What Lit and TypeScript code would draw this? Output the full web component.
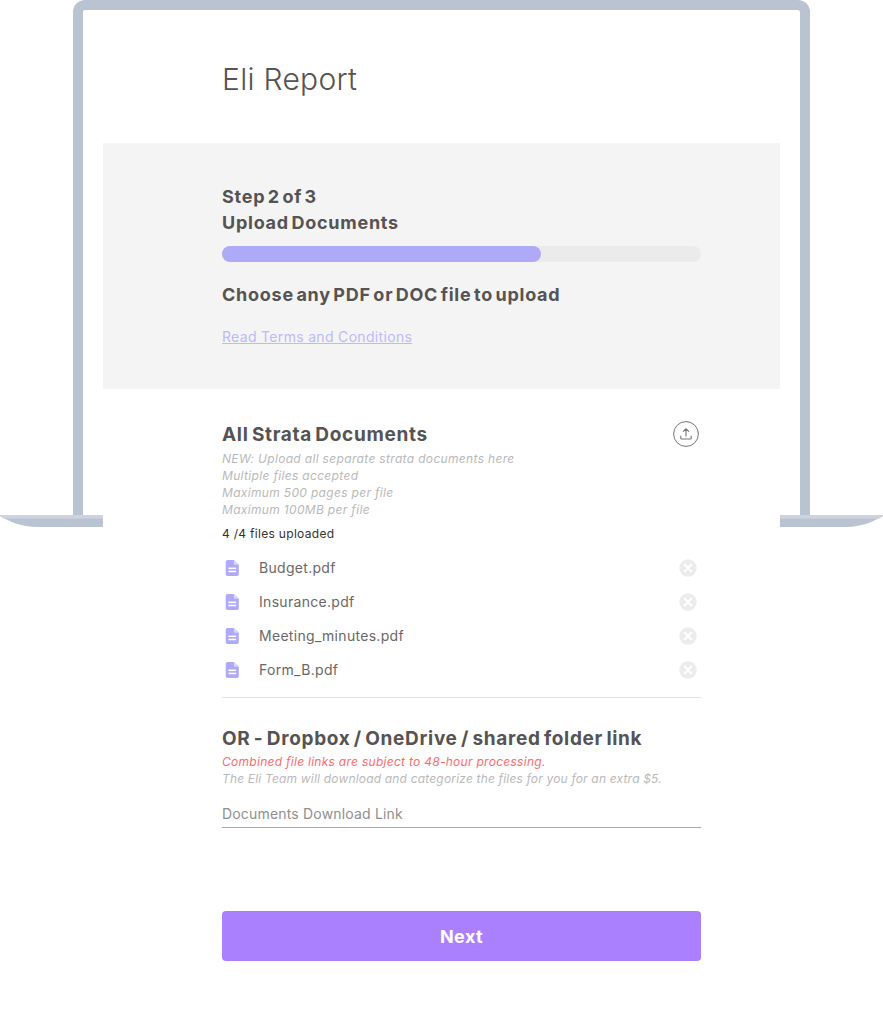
import { LitElement, html, css, svg } from "lit";
import { customElement } from "lit/decorators.js";

const fileIcon = svg`<svg class="file-icon" viewBox="0 0 16 20" width="15" height="18"><path fill="#aeaaf8" d="M2.5 1h7L15 6.5V17a2 2 0 0 1-2 2H2.5a2 2 0 0 1-2-2V3a2 2 0 0 1 2-2z"/><path fill="#e6e4fd" d="M9.5 1.2V5a1.5 1.5 0 0 0 1.500 1.500h3.800z" opacity=".75"/><rect x="3.500" y="9.500" width="8.500" height="1.700" fill="#fff"/><rect x="3.500" y="13" width="8.500" height="1.700" fill="#fff"/></svg>`;

const closeIcon = svg`<svg viewBox="0 0 18 18" width="18" height="18"><circle cx="9" cy="9" r="8.700" fill="#ececec"/><path d="M5.800 5.800l6.400 6.400M12.200 5.800l-6.400 6.400" stroke="#fff" stroke-width="2" stroke-linecap="round"/></svg>`;

const uploadIcon = svg`<svg viewBox="0 0 26 26" width="26" height="26" fill="none" stroke="#757575"><circle cx="13" cy="13" r="12.400" stroke-width="1"/><path d="M13 15.500V8M10 10.700 13 7.800l3 2.900M7.800 14.800v2.200a1 1 0 0 0 1 1h8.400a1 1 0 0 0 1-1v-2.200" stroke-width="1.100"/></svg>`;

const files = ["Budget.pdf", "Insurance.pdf", "Meeting_minutes.pdf", "Form_B.pdf"];

@customElement("app-root")
export class AppRoot extends LitElement {
  static styles = css`
    :host {
      display: block;
      position: relative;
      width: 883px;
      height: 1024px;
      overflow: hidden;
      background: #fff;
      font-family: Inter, "Open Sans", sans-serif;
      color: #555353;
    }
    .screen {
      position: absolute;
      left: 73px;
      top: 0;
      width: 737px;
      height: 515px;
      box-sizing: border-box;
      border: 10px solid #bac3d2;
      border-bottom: 0;
      border-radius: 12px 12px 0 0;
    }
    .base {
      position: absolute;
      left: 0;
      top: 515px;
      width: 883px;
      height: 12px;
    }
    .sheet {
      position: relative;
      margin-left: 103px;
      width: 677px;
      height: 1024px;
      display: flex;
      flex-direction: column;
    }
    .head {
      height: 143px;
      padding-left: 119px;
      box-sizing: border-box;
    }
    h1 {
      margin: 0;
      padding-top: 59px;
      font-size: 30px;
      line-height: 40px;
      font-weight: 300;
      letter-spacing: 0.3px;
    }
    .panel {
      height: 246px;
      box-sizing: border-box;
      background: #f4f4f4;
      padding: 41px 79px 0 119px;
    }
    .step {
      margin: 0;
      font-size: 18px;
      line-height: 26px;
      font-weight: 700;
      letter-spacing: 0.75px;
      word-spacing: -2.500px;
    }
    .track {
      margin-top: 10px;
      height: 16px;
      border-radius: 8px;
      background: #ebebeb;
    }
    .fill {
      height: 100%;
      width: 319px;
      border-radius: 8px;
      background: #aeaaf8;
    }
    .choose {
      margin: 20px 0 0;
      font-size: 18px;
      line-height: 26px;
      font-weight: 700;
      letter-spacing: 0.75px;
      word-spacing: -2.500px;
    }
    .terms {
      display: block;
      margin-top: 19px;
      font-size: 14px;
      line-height: 20px;
      letter-spacing: 0.32px;
      color: #bdb9fb;
      text-decoration: underline;
    }
    .sheet-bg {
      flex: 1;
      background: #fff;
      padding: 0 79px 0 119px;
    }
    .title-row {
      display: flex;
      justify-content: space-between;
      align-items: center;
      padding-top: 31px;
      padding-right: 2px;
    }
    h2 {
      margin: 0;
      padding-top: 2px;
      font-size: 19px;
      line-height: 26px;
      font-weight: 700;
      letter-spacing: 0.68px;
      word-spacing: -1.800px;
    }
    .title-row svg { display: block; }
    .note {
      margin: 0;
      font-size: 12px;
      line-height: 17px;
      font-style: italic;
      letter-spacing: 0.33px;
      color: #b9b9b9;
    }
    .notes { margin-top: 2px; }
    .count {
      margin: 7px 0 0;
      font-size: 12px;
      line-height: 17px;
      letter-spacing: 0.3px;
      color: #333;
    }
    .files {
      list-style: none;
      margin: 9px 0 0;
      padding: 0;
      border-bottom: 1px solid #e2e2e2;
      padding-bottom: 10px;
    }
    .file {
      display: flex;
      align-items: center;
      height: 34px;
      font-size: 14px;
      letter-spacing: 0.3px;
      color: #6a6868;
    }
    .file-icon { margin-left: 3px; flex: none; }
    .file span { margin-left: 19px; flex: 1; position: relative; top: -1px; }
    .file button {
      all: unset;
      display: block;
      width: 18px;
      height: 18px;
      margin-right: 4px;
    }
    .file button svg { display: block; }
    h2.or { margin-top: 26px; }
    .red { color: #ff6b6b; letter-spacing: 0.28px; }
    .tight { letter-spacing: 0.18px; }
    .or-notes { margin-top: 1px; }
    .input {
      margin-top: 14px;
      height: 27px;
      box-sizing: border-box;
      border-bottom: 1px solid #a9a9a9;
      font-size: 14px;
      line-height: 26px;
      letter-spacing: 0.18px;
      color: #8f8f8f;
    }
    .next {
      all: unset;
      display: block;
      box-sizing: border-box;
      width: 100%;
      margin-top: 83px;
      height: 50px;
      padding-top: 1px;
      border-radius: 4px;
      background: #ab80ff;
      color: #fff;
      font-size: 18px;
      line-height: 50px;
      font-weight: 700;
      letter-spacing: 0.4px;
      text-align: center;
    }
  `;

  render() {
    return html`
      <div class="screen"></div>
      <svg class="base" viewBox="0 0 883 12" width="883" height="12">
        <path fill="#bac3d2" d="M0 1a1 1 0 0 1 1-1h881a1 1 0 0 1 1 1c-9 5-20 11-38 11H38C20 12 9 6 0 1z"/>
        <path fill="#cdd4df" d="M0 1a1 1 0 0 1 1-1h881a1 1 0 0 1 1 1l-4 2.500H4z"/>
      </svg>
      <div class="sheet">
        <header class="head"><h1>Eli Report</h1></header>
        <section class="panel">
          <p class="step">Step 2 of 3<br />Upload Documents</p>
          <div class="track"><div class="fill"></div></div>
          <p class="choose">Choose any PDF or DOC file to upload</p>
          <a class="terms">Read Terms and Conditions</a>
        </section>
        <section class="sheet-bg">
          <div class="title-row"><h2>All Strata Documents</h2>${uploadIcon}</div>
          <div class="notes">
            <p class="note">NEW: Upload all separate strata documents here</p>
            <p class="note">Multiple files accepted</p>
            <p class="note">Maximum 500 pages per file</p>
            <p class="note">Maximum 100MB per file</p>
          </div>
          <p class="count">4 /4 files uploaded</p>
          <ul class="files">
            ${files.map(
              (f) => html`<li class="file">${fileIcon}<span>${f}</span><button>${closeIcon}</button></li>`
            )}
          </ul>
          <h2 class="or">OR - Dropbox / OneDrive / shared folder link</h2>
          <div class="or-notes">
            <p class="note red">Combined file links are subject to 48-hour processing.</p>
            <p class="note tight">The Eli Team will download and categorize the files for you for an extra $5.</p>
          </div>
          <div class="input">Documents Download Link</div>
          <button class="next">Next</button>
        </section>
      </div>
    `;
  }
}
